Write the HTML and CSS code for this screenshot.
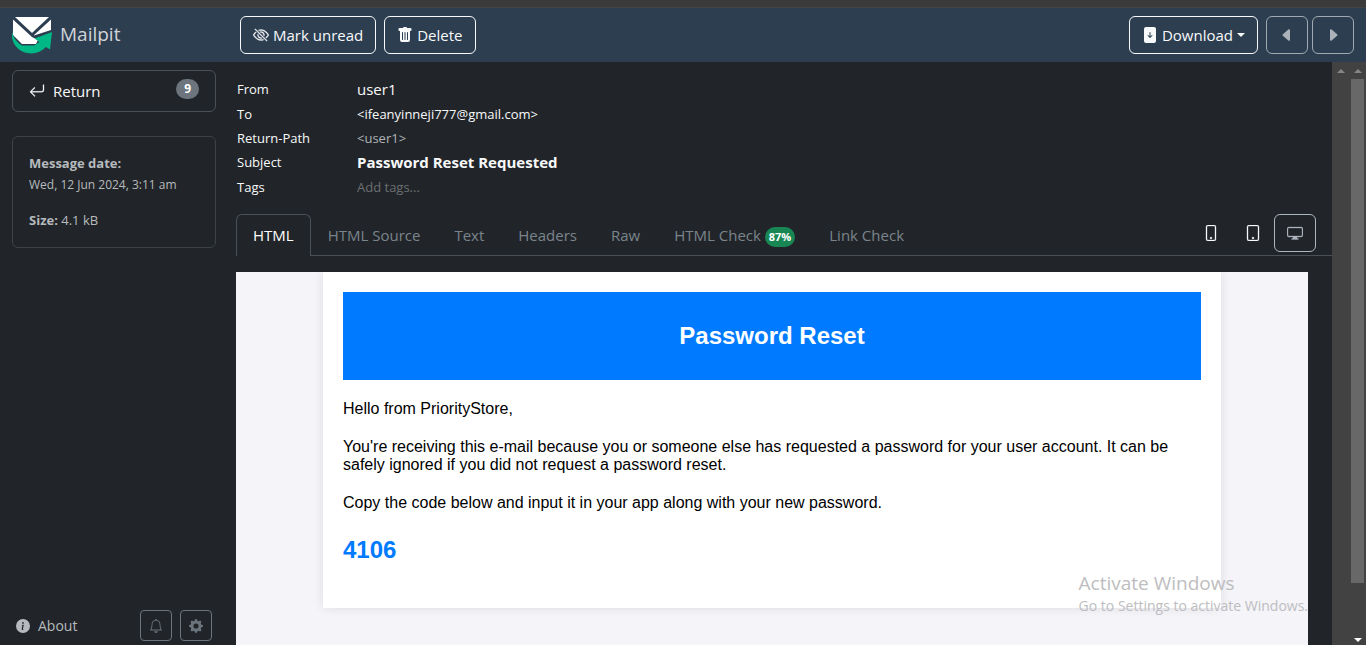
FILE: index.html
```html
<!DOCTYPE html>
<html lang="en">
<head>
<meta charset="utf-8">
<meta name="viewport" content="width=device-width, initial-scale=1">
<title>Mailpit</title>
<link rel="stylesheet" href="styles.css">
</head>
<body>
<div class="browser-edge"></div>
<header class="navbar">
  <a class="brand" href="#">
    <svg class="logo" viewBox="0 0 40 37" aria-hidden="true">
      <path fill="#fff" d="M3 0H37L20 16zM1 2.500L20 20 26 23 24 27H10L1 18zM39 2.500V13L22 18.500V18z"/>
      <path fill="#00b786" d="M0 12C0 20 5 25.500 10 28.500H22L27.500 25 22.500 21.500 40 15 38 32.500 34 30C29 35.500 22 37.500 15 36 4 33.500-2 24 0 12z"/>
    </svg>
    <span>Mailpit</span>
  </a>
  <div class="toolbar">
    <button class="btn" type="button">
      <svg class="icon heavy" viewBox="0 0 16 16" aria-hidden="true"><path d="M13.359 11.238C15.060 9.720 16 8 16 8s-3-5.500-8-5.500a7 7 0 0 0-2.790.588l.770.771A6 6 0 0 1 8 3.500c2.120 0 3.879 1.168 5.168 2.457A13 13 0 0 1 14.828 8q-.086.130-.195.288c-.335.480-.830 1.120-1.465 1.755q-.247.248-.517.486z"/><path d="M11.297 9.176a3.500 3.500 0 0 0-4.474-4.474l.823.823a2.500 2.500 0 0 1 2.829 2.829zm-2.943 1.299.822.822a3.500 3.500 0 0 1-4.474-4.474l.823.823a2.500 2.500 0 0 0 2.829 2.829"/><path d="M3.350 5.470q-.270.240-.518.487A13 13 0 0 0 1.172 8l.195.288c.335.480.830 1.120 1.465 1.755C4.121 11.332 5.881 12.500 8 12.500c.716 0 1.390-.133 2.020-.360l.770.772A7 7 0 0 1 8 13.500C3 13.500 0 8 0 8s.939-1.721 2.641-3.238l.708.709zm10.296 8.884-12-12 .708-.708 12 12z"/></svg>
      Mark unread
    </button>
    <button class="btn" type="button">
      <svg class="icon" viewBox="0 0 16 16" aria-hidden="true"><path d="M2.500 1a1 1 0 0 0-1 1v1a1 1 0 0 0 1 1H3v9a2 2 0 0 0 2 2h6a2 2 0 0 0 2-2V4h.500a1 1 0 0 0 1-1V2a1 1 0 0 0-1-1H10a1 1 0 0 0-1-1H7a1 1 0 0 0-1 1zm3 4a.5.5 0 0 1 .5.5v7a.5.5 0 0 1-1 0v-7a.5.5 0 0 1 .5-.5M8 5a.5.5 0 0 1 .5.5v7a.5.5 0 0 1-1 0v-7A.5.5 0 0 1 8 5m3 .5v7a.5.5 0 0 1-1 0v-7a.5.5 0 0 1 1 0"/></svg>
      Delete
    </button>
    <button class="btn download" type="button">
      <svg class="icon" viewBox="0 0 16 16" aria-hidden="true"><path d="M12 0H4a2 2 0 0 0-2 2v12a2 2 0 0 0 2 2h8a2 2 0 0 0 2-2V2a2 2 0 0 0-2-2M8 5a.5.5 0 0 1 .5.5v3.793l1.146-1.147a.5.5 0 0 1 .708.708l-2 2a.5.5 0 0 1-.708 0l-2-2a.5.5 0 1 1 .708-.708L7.500 9.293V5.500A.5.5 0 0 1 8 5"/></svg>
      Download
      <span class="caret"></span>
    </button>
    <button class="btn step muted" type="button" aria-label="Previous message">
      <svg class="icon" viewBox="0 0 16 16" aria-hidden="true"><path d="m3.860 8.753 5.482 4.796c.646.566 1.658.106 1.658-.753V3.204a1 1 0 0 0-1.659-.753l-5.480 4.796a1 1 0 0 0 0 1.506z"/></svg>
    </button>
    <button class="btn step muted" type="button" aria-label="Next message">
      <svg class="icon" viewBox="0 0 16 16" aria-hidden="true"><path d="m12.140 8.753-5.482 4.796c-.646.566-1.658.106-1.658-.753V3.204a1 1 0 0 1 1.659-.753l5.480 4.796a1 1 0 0 1 0 1.506z"/></svg>
    </button>
  </div>
</header>

<div class="layout">
  <aside class="sidebar">
    <a class="return" href="#">
      <svg class="icon heavy" viewBox="0 0 16 16" aria-hidden="true"><path d="M14.500 1.500a.5.5 0 0 1 .5.5v4.800a2.500 2.500 0 0 1-2.500 2.500H2.707l3.347 3.346a.5.5 0 0 1-.708.708l-4.200-4.200a.5.5 0 0 1 0-.708l4-4a.5.5 0 1 1 .708.708L2.707 8.300H12.500A1.500 1.500 0 0 0 14 6.800V2a.5.5 0 0 1 .5-.5"/></svg>
      <span>Return</span>
      <span class="count">9</span>
    </a>
    <section class="card">
      <p class="card-date"><strong>Message date:</strong><br><small>Wed, 12 Jun 2024, 3:11 am</small></p>
      <p><strong>Size:</strong> 4.1 kB</p>
    </section>
    <footer class="side-foot">
      <a class="about" href="#">
        <svg class="icon" viewBox="0 0 16 16" aria-hidden="true"><path d="M8 16A8 8 0 1 0 8 0a8 8 0 0 0 0 16m.930-9.412-1 4.705c-.070.340.029.533.304.533.194 0 .487-.070.686-.246l-.088.416c-.287.346-.920.598-1.465.598-.703 0-1.002-.422-.808-1.319l.738-3.468c.064-.293.006-.399-.287-.470l-.451-.081.082-.381 2.290-.287zM8 5.500a1 1 0 1 1 0-2 1 1 0 0 1 0 2"/></svg>
        About
      </a>
      <button class="btn-sm" type="button" aria-label="Notifications">
        <svg class="icon" viewBox="0 0 16 16" aria-hidden="true"><path d="M8 16a2 2 0 0 0 2-2H6a2 2 0 0 0 2 2M8 1.918l-.797.161A4 4 0 0 0 4 6c0 .628-.134 2.197-.459 3.742-.160.767-.376 1.566-.663 2.258h10.244c-.287-.692-.502-1.490-.663-2.258C12.134 8.197 12 6.628 12 6a4 4 0 0 0-3.203-3.920zM14.220 12c.223.447.481.801.780 1H1c.299-.199.557-.553.780-1C2.680 10.200 3 6.880 3 6c0-2.420 1.720-4.440 4.005-4.901a1 1 0 1 1 1.990 0A5 5 0 0 1 13 6c0 .880.320 4.200 1.220 6"/></svg>
      </button>
      <button class="btn-sm" type="button" aria-label="Settings">
        <svg class="icon" viewBox="0 0 16 16" aria-hidden="true"><path d="M9.405 1.050c-.413-1.400-2.397-1.400-2.810 0l-.100.340a1.464 1.464 0 0 1-2.105.872l-.310-.170c-1.283-.698-2.686.705-1.987 1.987l.169.311c.446.820.023 1.841-.872 2.105l-.340.100c-1.400.413-1.400 2.397 0 2.810l.340.100a1.464 1.464 0 0 1 .872 2.105l-.170.310c-.698 1.283.705 2.686 1.987 1.987l.311-.169a1.464 1.464 0 0 1 2.105.872l.100.340c.413 1.400 2.397 1.400 2.810 0l.100-.340a1.464 1.464 0 0 1 2.105-.872l.310.170c1.283.698 2.686-.705 1.987-1.987l-.169-.311a1.464 1.464 0 0 1 .872-2.105l.340-.100c1.400-.413 1.400-2.397 0-2.810l-.340-.100a1.464 1.464 0 0 1-.872-2.105l.170-.310c.698-1.283-.705-2.686-1.987-1.987l-.311.169a1.464 1.464 0 0 1-2.105-.872zM8 10.930a2.929 2.929 0 1 1 0-5.860 2.929 2.929 0 0 1 0 5.858z"/></svg>
      </button>
    </footer>
  </aside>

  <main class="message">
    <table class="meta">
      <tr><th scope="row">From</th><td class="from">user1</td></tr>
      <tr><th scope="row">To</th><td>&lt;ifeanyinneji777@gmail.com&gt;</td></tr>
      <tr><th scope="row">Return-Path</th><td class="dim">&lt;user1&gt;</td></tr>
      <tr><th scope="row">Subject</th><td class="subject">Password Reset Requested</td></tr>
      <tr><th scope="row"><label for="tags">Tags</label></th><td><input class="tags" id="tags" type="text" placeholder="Add tags..."></td></tr>
    </table>

    <nav class="tabs">
      <button class="tab active" type="button">HTML</button>
      <button class="tab" type="button">HTML Source</button>
      <button class="tab" type="button">Text</button>
      <button class="tab" type="button">Headers</button>
      <button class="tab" type="button">Raw</button>
      <button class="tab" type="button">HTML Check <span class="score">87%</span></button>
      <button class="tab" type="button">Link Check</button>
      <div class="devices">
        <button class="device" type="button" aria-label="Phone view">
          <svg class="icon heavy" viewBox="0 0 16 16" aria-hidden="true"><path d="M11 1a1 1 0 0 1 1 1v12a1 1 0 0 1-1 1H5a1 1 0 0 1-1-1V2a1 1 0 0 1 1-1zM5 0a2 2 0 0 0-2 2v12a2 2 0 0 0 2 2h6a2 2 0 0 0 2-2V2a2 2 0 0 0-2-2z"/><path d="M8 14a1 1 0 1 0 0-2 1 1 0 0 0 0 2"/></svg>
        </button>
        <button class="device" type="button" aria-label="Tablet view">
          <svg class="icon heavy" viewBox="0 0 16 16" aria-hidden="true"><path d="M12 1a1 1 0 0 1 1 1v12a1 1 0 0 1-1 1H4a1 1 0 0 1-1-1V2a1 1 0 0 1 1-1zM4 0a2 2 0 0 0-2 2v12a2 2 0 0 0 2 2h8a2 2 0 0 0 2-2V2a2 2 0 0 0-2-2z"/><path d="M8 14a1 1 0 1 0 0-2 1 1 0 0 0 0 2"/></svg>
        </button>
        <button class="device selected" type="button" aria-label="Desktop view">
          <svg class="icon heavy" viewBox="0 0 16 16" aria-hidden="true"><path d="M0 4s0-2 2-2h12s2 0 2 2v6s0 2-2 2h-4q0 1 .250 1.500H11a.5.5 0 0 1 0 1H5a.5.5 0 0 1 0-1h.750Q6 13 6 12H2s-2 0-2-2zm1.398-.855a.760.760 0 0 0-.254.302A1.500 1.500 0 0 0 1 4.010V10c0 .325.078.502.145.602q.105.156.302.254a1.500 1.500 0 0 0 .538.143L2.010 11H14c.325 0 .502-.078.602-.145a.760.760 0 0 0 .254-.302 1.500 1.500 0 0 0 .143-.538L15 9.990V4c0-.325-.078-.502-.145-.602a.760.760 0 0 0-.302-.254A1.500 1.500 0 0 0 13.990 3H2c-.325 0-.502.078-.602.145"/></svg>
        </button>
      </div>
    </nav>

    <div class="preview">
      <article class="email">
        <h1 class="email-title">Password Reset</h1>
        <p>Hello from PriorityStore,</p>
        <p>You're receiving this e-mail because you or someone else has requested a password for your user account. It can be safely ignored if you did not request a password reset.</p>
        <p>Copy the code below and input it in your app along with your new password.</p>
        <h2 class="code">4106</h2>
      </article>
    </div>
  </main>

  <div class="scrollbar"><span class="arrow up"></span></div>
  <div class="scrollbar">
    <span class="arrow up"></span>
    <span class="thumb"></span>
    <span class="arrow down"></span>
  </div>
</div>

<div class="watermark">
  <div class="watermark-title">Activate Windows</div>
  <div>Go to Settings to activate Windows.</div>
</div>
</body>
</html>
```

FILE: styles.css
```css
* { box-sizing: border-box; }

body {
  display: flex;
  flex-direction: column;
  height: 100vh;
  margin: 0;
  overflow: hidden;
  background: #212529;
  color: #f8f9fa;
  font: 15px/24px "Open Sans", "Noto Sans", sans-serif;
}

button, input { font: inherit; color: inherit; }
a { color: inherit; text-decoration: none; }
p, h1, h2 { margin: 0; }

.icon {
  flex: none;
  width: 16px;
  height: 16px;
  fill: currentColor;
}

.icon.heavy { stroke: currentColor; stroke-width: 0.3; }

.browser-edge {
  flex: none;
  height: 8px;
  background: #3b3b3b;
  border-bottom: 1px solid #444;
}

/* Top bar */
.navbar {
  display: flex;
  flex: none;
  align-items: center;
  height: 54px;
  padding-right: 12px;
  background: #2c3e50;
}

.brand {
  display: flex;
  align-items: center;
  gap: 8px;
  flex: 0 0 240px;
  padding-left: 12px;
  color: #d0d4d9;
  font-size: 19px;
}

.brand span { padding-bottom: 3px; }

.logo { width: 40px; height: 37px; }

.toolbar { display: flex; flex: 1; gap: 8px; }

.btn {
  display: flex;
  align-items: center;
  justify-content: center;
  gap: 4px;
  height: 38px;
  padding: 0 12px;
  border: 1px solid #f8f9fa;
  border-radius: 6px;
  background: transparent;
}

.download { margin-left: auto; }
.muted { border-color: #a2a9b1; color: #abb2b9; }
.step { width: 42px; }
.step + .step { margin-left: -4px; }

.caret {
  border: 4px solid transparent;
  border-top-color: currentColor;
  border-bottom: 0;
}

.layout { display: flex; flex: 1; min-height: 0; }

/* Sidebar */
.sidebar {
  display: flex;
  flex-direction: column;
  flex: 0 0 228px;
  gap: 24px;
  padding: 8px 12px 4px;
}

.return {
  display: flex;
  gap: 8px;
  align-items: center;
  height: 42px;
  padding: 0 16px;
  border: 1px solid #495057;
  border-radius: 6px;
}

.count {
  margin: 0 0 4px auto;
  padding: 0 8px;
  border-radius: 10px;
  background: #6c757d;
  color: #fff;
  font-size: 12px;
  font-weight: 700;
  line-height: 20px;
}

.card {
  padding: 16px;
  border: 1px solid #3d4246;
  border-radius: 6px;
  color: #b6babd;
  font-size: 13px;
  line-height: 21px;
}

.card-date { margin-bottom: 15px; }
.card-date strong { font-size: 13px; }
.card small { font-size: 12px; }

.side-foot {
  display: flex;
  align-items: center;
  gap: 8px;
  margin-top: auto;
  padding: 0 4px;
}

.about {
  display: flex;
  align-items: center;
  gap: 8px;
  margin-right: auto;
  color: #b6babd;
  font-size: 14px;
}

.about .icon { width: 14px; height: 14px; }

.btn-sm {
  display: flex;
  align-items: center;
  justify-content: center;
  width: 32px;
  height: 31px;
  padding: 0;
  border: 1px solid #6c757d;
  border-radius: 4px;
  background: transparent;
  color: #6c757d;
}

.btn-sm .icon { width: 14px; height: 14px; }

/* Message */
.message {
  display: flex;
  flex: 1;
  flex-direction: column;
  min-width: 0;
  padding: 14px 0 0 8px;
}

.meta {
  width: 100%;
  margin-bottom: 14px;
  border-collapse: collapse;
  font-size: 13px;
  line-height: 20px;
}

.meta th {
  width: 121px;
  padding: 2px 0 2px 1px;
  font-weight: 400;
  text-align: left;
}

.meta td { padding: 2px 0; }
.meta .from { padding: 3px 0; font-size: 15px; }
.meta .subject { font-size: 15px; font-weight: 700; }
.meta .dim { color: #b0b4b8; }

.tags {
  display: block;
  width: 100%;
  height: 22px;
  padding: 0;
  border: 0;
  background: transparent;
}

.tags::placeholder { color: #6c6f72; opacity: 1; }

.tabs {
  display: flex;
  flex: none;
  height: 42px;
  border-bottom: 1px solid #495057;
}

.tab {
  height: 41px;
  padding: 0 16px;
  border: 1px solid transparent;
  border-bottom: 0;
  border-radius: 6px 6px 0 0;
  background: #212529;
  color: #7b848c;
  white-space: nowrap;
}

.tab.active {
  height: 42px;
  padding-bottom: 1px;
  border-color: #495057;
  color: #fff;
}

.score {
  display: inline-block;
  padding: 0 4px;
  border-radius: 10px;
  background: #198754;
  color: #fff;
  font-size: 11px;
  font-weight: 700;
  line-height: 20px;
}

.devices { display: flex; margin-left: auto; padding-right: 16px; }

.device {
  display: flex;
  align-items: center;
  justify-content: center;
  width: 42px;
  height: 38px;
  padding: 0;
  border: 1px solid transparent;
  border-radius: 6px;
  background: transparent;
}

.device.selected { border-color: #adb5bd; color: #adb5bd; }

/* Rendered e-mail */
.preview {
  flex: 1;
  margin: 16px 24px 0 0;
  overflow: hidden;
  background: #f4f4f9;
  color: #000;
  font: 16px/18px "Liberation Sans", Arial, sans-serif;
}

.email {
  max-width: 898px;
  margin: 0 auto;
  padding: 20px 20px 44px;
  background: #fff;
  box-shadow: 0 0 10px rgba(0, 0, 0, 0.1);
}

.email p { margin: 20px 0; }

.email-title {
  padding: 30px;
  background: #007bff;
  color: #fff;
  font-size: 24px;
  line-height: 28px;
  text-align: center;
}

.code { margin-top: 24px; color: #007bff; font-size: 24px; line-height: 28px; }

/* Scrollbars */
.scrollbar {
  display: flex;
  flex: 0 0 17px;
  flex-direction: column;
  align-items: center;
  gap: 6px;
  padding: 7px 0 3px;
  background: #424242;
}

.arrow { border: 4px solid transparent; color: #868686; }
.arrow.up { border-top: 0; border-bottom-color: currentColor; }
.arrow.down { margin-top: auto; border-bottom: 0; border-top-color: #fff; }
.thumb { width: 13px; height: 88%; background: #686868; }

.watermark {
  position: absolute;
  right: 58px;
  bottom: 29px;
  color: #bdbdc0;
  font-size: 14px;
  line-height: 20px;
  white-space: nowrap;
}

.watermark-title { font-size: 19px; line-height: 26px; }
```
